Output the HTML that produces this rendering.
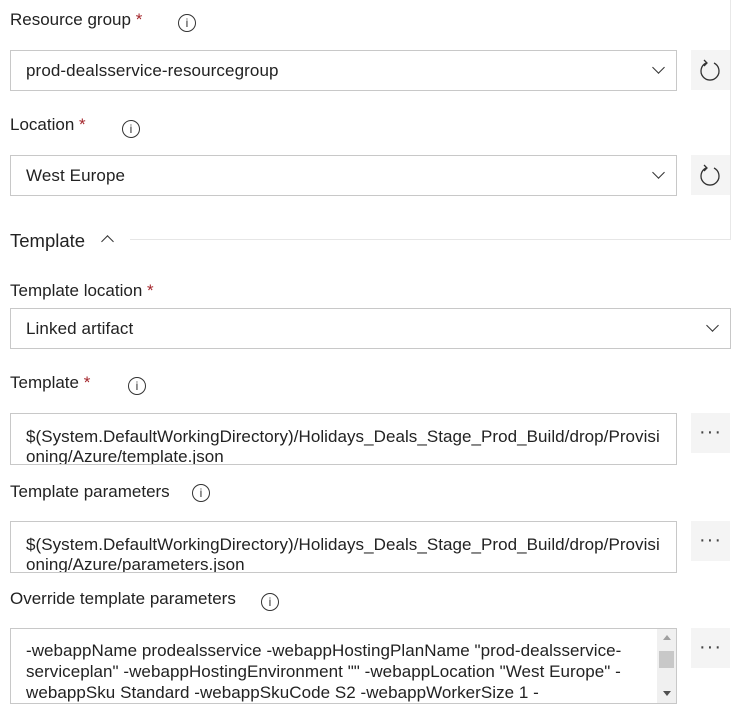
<!DOCTYPE html>
<html><head><style>
*{box-sizing:border-box;margin:0;padding:0}
body{width:735px;height:708px;background:#fff;font-family:"Liberation Sans",sans-serif;color:#212121;position:relative;overflow:hidden;font-size:16px}
.a{position:absolute;white-space:nowrap}
.lbl{font-size:17px;color:#222;letter-spacing:0}
.req{color:#a4262c}
.info{position:absolute;width:18px;height:18px;border:1.3px solid #333;border-radius:50%;font-size:12px;text-align:center;line-height:16px;font-family:"Liberation Sans",sans-serif;color:#333}
.box{position:absolute;border:1px solid #c8c8c8;background:#fff}
.val{font-size:17px;color:#222;letter-spacing:0.1px}
.btn{position:absolute;background:#f4f4f4;width:39px;height:40px}
.dots{position:absolute;left:0;right:0;top:8px;text-align:center;font-size:20px;letter-spacing:1px;color:#444}
.chev{position:absolute;width:9px;height:9px;border-right:1.2px solid #333;border-bottom:1.2px solid #333;transform:rotate(45deg)}
.ta{font-size:17px;line-height:20px;color:#222;letter-spacing:0.05px;padding:13px 0 0 15px}
</style></head><body>
<div style="position:absolute;left:730px;top:0;width:1px;height:240px;background:#e8e8e8"></div>

<div class="a lbl" style="left:10px;top:10px">Resource group <span class="req">*</span></div>
<div class="info" style="left:178px;top:14px">i</div>
<div class="box" style="left:10px;top:50px;width:667px;height:41px"><div class="a val" style="left:15px;top:10px">prod-dealsservice-resourcegroup</div><div class="chev" style="left:643px;top:12px"></div></div>
<div class="btn" style="left:691px;top:50px"><svg width="39" height="40"><path d="M15 13 A9 9 0 1 0 23 13" fill="none" stroke="#333" stroke-width="1.3"/><path d="M13 10 L16 13 L13 16" fill="none" stroke="#333" stroke-width="1.3"/></svg></div>

<div class="a lbl" style="left:10px;top:115px">Location <span class="req">*</span></div>
<div class="info" style="left:122px;top:120px">i</div>
<div class="box" style="left:10px;top:155px;width:667px;height:41px"><div class="a val" style="left:15px;top:10px">West Europe</div><div class="chev" style="left:643px;top:12px"></div></div>
<div class="btn" style="left:691px;top:155px"><svg width="39" height="40"><path d="M15 13 A9 9 0 1 0 23 13" fill="none" stroke="#333" stroke-width="1.3"/><path d="M13 10 L16 13 L13 16" fill="none" stroke="#333" stroke-width="1.3"/></svg></div>

<div class="a" style="left:10px;top:230px;font-size:18.5px;color:#222">Template</div>
<div class="chev" style="left:103px;top:237px;transform:rotate(225deg)"></div>
<div style="position:absolute;left:130px;top:239px;width:600px;height:1px;background:#e6e6e6"></div>

<div class="a lbl" style="left:10px;top:281px">Template location <span class="req">*</span></div>
<div class="box" style="left:10px;top:308px;width:721px;height:41px"><div class="a val" style="left:15px;top:10px">Linked artifact</div><div class="chev" style="left:697px;top:12px"></div></div>

<div class="a lbl" style="left:10px;top:373px">Template <span class="req">*</span></div>
<div class="info" style="left:128px;top:377px">i</div>
<div class="box ta" style="left:10px;top:413px;width:667px;height:52px;overflow:hidden">$(System.DefaultWorkingDirectory)/Holidays_Deals_Stage_Prod_Build/drop/Provisi<br>oning/Azure/template.json</div>
<div class="btn" style="left:691px;top:413px"><div class="dots">···</div></div>

<div class="a lbl" style="left:10px;top:482px">Template parameters</div>
<div class="info" style="left:192px;top:484px">i</div>
<div class="box ta" style="left:10px;top:521px;width:667px;height:52px;overflow:hidden">$(System.DefaultWorkingDirectory)/Holidays_Deals_Stage_Prod_Build/drop/Provisi<br>oning/Azure/parameters.json</div>
<div class="btn" style="left:691px;top:521px"><div class="dots">···</div></div>

<div class="a lbl" style="left:10px;top:589px">Override template parameters</div>
<div class="info" style="left:261px;top:593px">i</div>
<div class="box ta" style="left:10px;top:628px;width:667px;height:76px;overflow:hidden;padding-top:11px;line-height:21px">-webappName prodealsservice -webappHostingPlanName "prod-dealsservice-<br>serviceplan" -webappHostingEnvironment "" -webappLocation "West Europe" -<br>webappSku Standard -webappSkuCode S2 -webappWorkerSize 1 -
<div style="position:absolute;left:646px;top:0;width:19px;height:74px;background:#f0f0f0"></div>
<div style="position:absolute;left:648px;top:22px;width:15px;height:17px;background:#c8c8c8"></div>
<div style="position:absolute;left:652px;top:6px;width:0;height:0;border-left:4px solid transparent;border-right:4px solid transparent;border-bottom:5px solid #a0a0a0"></div>
<div style="position:absolute;left:652px;top:62px;width:0;height:0;border-left:4px solid transparent;border-right:4px solid transparent;border-top:5px solid #505050"></div>
</div>
<div class="btn" style="left:691px;top:628px"><div class="dots">···</div></div>
</body></html>
